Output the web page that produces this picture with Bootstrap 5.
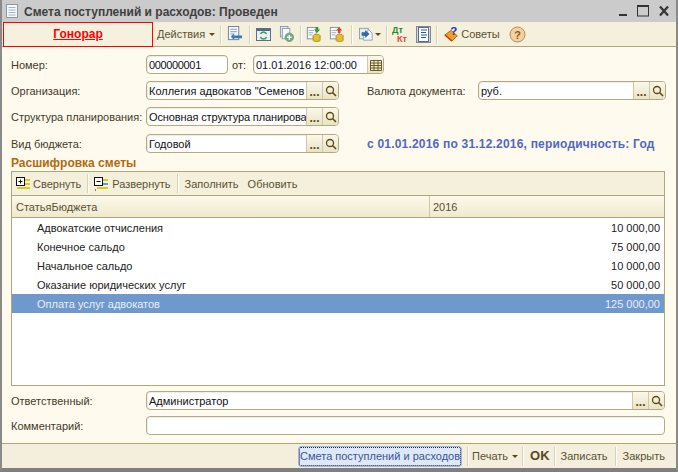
<!DOCTYPE html>
<html lang="ru">
<head>
<meta charset="utf-8">
<title>Смета</title>
<link href="https://cdn.jsdelivr.net/npm/bootstrap@5.3.0/dist/css/bootstrap.min.css" rel="stylesheet">
<style>
html,body{margin:0;width:678px;height:472px;overflow:hidden;background:#8f8f8f}
body{font:11px/16px "Liberation Sans",Arial,sans-serif;color:#3a3320}
.win{width:678px;height:472px;background:#cbcbcb;border-left:2px solid #8a8a8a;border-right:2px solid #8a8a8a;border-bottom:4px solid #7f7f7f}
.ttl{height:22px;flex:none;padding-left:4px}
.ttl-t{font-weight:700;font-size:12px;color:#3f3f3f;margin-left:5px;margin-top:1px}
.ctl{margin-left:auto;gap:10px;padding-right:7px}
.bar{height:25px;flex:none;background:#f4f0dc;border-bottom:1px solid #b0a67e}
.tabx{width:150px;height:25px;margin-left:1px;border:1px solid #f00;text-align:center;color:#f00;font-weight:700;font-size:12px;text-decoration:underline;line-height:22px;background:#f5f1de}
.bt{color:#5a5034}
.sp{width:1px;height:19px;background:#d8d2b6;box-shadow:1px 0 0 #fff;flex:none}
.car{width:0;height:0;border:3px solid transparent;border-top:3px solid #5a4a1c;border-bottom:0}
.frm{flex:1 1 auto;background:#fffaee;padding:0 11px 0 9px;min-height:0}
.rw{height:19px;flex:none}
.lbl{width:135px;flex:none;color:#3f3a2a;white-space:nowrap}
.lbl2{margin-left:28px;width:111px}
.fld{height:19px;border:1px solid #b4a97f;border-radius:4px;background:#fff;color:#111;padding-left:2px;line-height:18px;overflow:hidden;white-space:nowrap;flex:none;box-shadow:inset 1px 1px 0 #eee}
.fld-t{flex:1 1 auto;overflow:hidden;min-width:0}
.fw82{width:82px}.fw131{width:131px}.fw193{width:193px}.fw188{width:188px}
.ot{margin-left:4px;width:21px}
.numtx{letter-spacing:-.35px}
.tight{letter-spacing:-.12px}
.btn1c{width:16px;height:17px;flex:none;background:linear-gradient(#fbf8ea,#e9e3c7);border-left:1px solid #d0c8a5}
.dots{font-weight:700;line-height:20px;text-align:center;color:#5d4a10;font-size:12px}
.sect{color:#b26a0a;font-weight:700;font-size:12px;line-height:12px;margin-top:4px}
.tbl{height:215px;flex:none;margin-top:2px;border:1px solid #b0a67e;background:#fff}
.tb2{height:24px;flex:none;background:#f4f0dc;border-bottom:1px solid #b0a67e;padding-left:4px;color:#5a5034}
.hd{height:22px;flex:none;background:linear-gradient(#fdf9e9,#efe9cf);border-bottom:1px solid #b0a67e;color:#5a5034}
.hd-a{width:418px;padding-left:4px;border-right:1px solid #cfc7a4;height:100%;line-height:22px}
.hd-b{padding-left:3px;line-height:22px;height:100%}
.ln{height:19px;flex:none;padding:0 4px 0 25px;line-height:20px;color:#222}
.ln-on{background:#6f98cc;color:#e8eef8}
.ft{height:25px;flex:none;background:#f3efdc;border-top:1px solid #b0a67e;color:#5a5034}
.fb{width:164px;height:21px;margin-left:296px;border:1px solid #9db4e6;border-radius:3px;background:#dfe8fa;color:#3b5590;text-align:center;line-height:18px;outline:1px dotted #222;outline-offset:-2px;white-space:nowrap}
.okx{font-weight:700;font-size:13px;color:#5a4a1c}
.blue{color:#5069c2;font-weight:700;font-size:12px;letter-spacing:.2px;white-space:nowrap;margin-left:28px}
.l2{margin-left:2px}.l3{margin-left:3px}.l4{margin-left:4px}.l5{margin-left:5px}.l6{margin-left:6px}.l7{margin-left:7px}.l8{margin-left:8px}.l9{margin-left:9px}
.t7{margin-top:7px}.t8{margin-top:8px}.t5{margin-top:5px}.t6{margin-top:6px}
</style>
</head>
<body>
<div class="win d-flex flex-column">
  <div class="ttl d-flex align-items-center">
    <svg width="13" height="14" viewBox="0 0 13 14"><rect x=".5" y=".5" width="11" height="13" fill="#f4f7fb" stroke="#8c98a8"/><path d="M2.500 3.500h7M2.500 6h7M2.500 8.500h7M2.500 11h7" stroke="#a8b4c4"/></svg>
    <div class="ttl-t">Смета поступлений и расходов: Проведен</div>
    <div class="ctl d-flex align-items-center">
      <svg width="8" height="12" viewBox="0 0 8 12"><rect y="9" width="8" height="2" fill="#333"/></svg>
      <svg width="12" height="12" viewBox="0 0 12 12"><rect x=".5" y="1" width="11" height="10" fill="none" stroke="#333"/><path d="M0 1h12" stroke="#333" stroke-width="2"/></svg>
      <svg width="10" height="12" viewBox="0 0 10 12"><path d="M1 1.500l8 9M9 1.500l-8 9" stroke="#333" stroke-width="2.200"/></svg>
    </div>
  </div>
  <div class="bar d-flex align-items-center">
    <div class="tabx">Гонорар</div>
    <span class="bt l4">Действия</span><span class="car l4"></span>
    <span class="sp l5"></span>
    <svg class="l6" width="16" height="16" viewBox="0 0 17 17"><rect x="1.500" y=".5" width="11" height="14" fill="#f3f6fb" stroke="#6d7f99"/><path d="M3.500 3.500h7M3.500 6h7M3.500 8.500h4" stroke="#8a9ab0"/><path d="M16 10H7.500V8L4 11.500 7.500 15v-2H16z" fill="#3b7cb8"/></svg>
    <span class="sp l6"></span>
    <svg class="l6" width="15" height="15" viewBox="0 0 15 15"><rect x=".5" y="1.500" width="14" height="12" fill="#e8eff6" stroke="#5c7089"/><rect x="1" y="2" width="13" height="2" fill="#53698a"/><path d="M4.500 7a3.200 3.200 0 0 1 6 0M10.500 10a3.200 3.200 0 0 1-6 0" fill="none" stroke="#3e9a4a" stroke-width="1.500"/></svg>
    <svg class="l8" width="15" height="16" viewBox="0 0 16 17"><rect x="1.500" y=".5" width="8" height="11" fill="#eef2f8" stroke="#8a97a8"/><rect x="3.500" y="2.500" width="8" height="11" fill="#f6f8fc" stroke="#8a97a8"/><circle cx="11" cy="12" r="4.500" fill="#6fae7a" stroke="#7f9484"/><path d="M11 9.500v5M8.500 12h5" stroke="#fff" stroke-width="1.500"/></svg>
    <span class="sp l6"></span>
    <svg class="l5" width="15" height="16" viewBox="0 0 17 18"><rect x="1.500" y="1.500" width="10" height="13" fill="#f6f8fb" stroke="#7d8a9a"/><path d="M3 5h6M3 7.500h5M3 10h4" stroke="#9aa8b8"/><path d="M9 4h2V1h3v3h2l-3.500 4z" fill="#2f9a3c"/><ellipse cx="12" cy="11" rx="4" ry="1.500" fill="#f0c83c" stroke="#b08a18"/><path d="M8 11v5c0 2 8 2 8 0v-5" fill="#e8bc30" stroke="#b08a18"/></svg>
    <svg class="l8" width="15" height="16" viewBox="0 0 17 18"><rect x="1.500" y="1.500" width="10" height="13" fill="#f6f8fb" stroke="#7d8a9a"/><path d="M3 5h6M3 7.500h5M3 10h4" stroke="#9aa8b8"/><path d="M8 5h2v3h3V5h2l-3.500-4z" fill="#d8402c"/><ellipse cx="12" cy="11" rx="4" ry="1.500" fill="#f0c83c" stroke="#b08a18"/><path d="M8 11v5c0 2 8 2 8 0v-5" fill="#e8bc30" stroke="#b08a18"/></svg>
    <span class="sp l7"></span>
    <svg class="l7" width="14" height="14" viewBox="0 0 16 16"><rect x=".5" y="1.500" width="10" height="12" fill="#e8edf4" stroke="#8a97a8"/><path d="M11 3l4 4v8H5v-4z" fill="#f6f8fc" stroke="#8a97a8"/><path d="M3 6h4V3.500L12 8l-5 4.500V10H3z" fill="#2b6ca8"/></svg>
    <span class="car l2"></span>
    <span class="sp l5"></span>
    <svg class="l5" width="16" height="17" viewBox="0 0 16 17"><text x="0" y="7" font-family="Liberation Sans" font-size="9" font-weight="700" fill="#1f8a2a">Дт</text><text x="5" y="16" font-family="Liberation Sans" font-size="9" font-weight="700" fill="#f04040">Кт</text></svg>
    <svg class="l8" width="15" height="17" viewBox="0 0 15 17"><rect x=".5" y=".5" width="14" height="16" fill="#d5dae2" stroke="#7f8894"/><rect x="2.500" y="1.500" width="10" height="14" fill="#fff" stroke="#4f6f9a"/><path d="M5 4h6M5 6.500h5M5 9h6M5 11.500h5" stroke="#255a9a"/></svg>
    <span class="sp l5"></span>
    <svg class="l7" width="15" height="16" viewBox="0 0 17 18"><path d="M1 10l7-5 7 6-6 6z" fill="#f0a020" stroke="#a85f10"/><path d="M1 10l8 7" stroke="#c83020" stroke-width="1.500"/><text x="7" y="10" font-family="Liberation Sans" font-size="13" font-weight="700" fill="#2030c0">?</text></svg>
    <span class="bt l2">Советы</span>
    <svg class="l9" width="17" height="17" viewBox="0 0 17 17"><circle cx="8.500" cy="8.500" r="7.500" fill="#f4d2a0" stroke="#b08a60"/><text x="8.500" y="12.500" text-anchor="middle" font-family="Liberation Sans" font-size="11" font-weight="700" fill="#8a5a20">?</text></svg>
  </div>
  <div class="frm d-flex flex-column">
    <div class="rw d-flex align-items-center t8">
      <div class="lbl">Номер:</div>
      <div class="fld numtx fw82">000000001</div>
      <div class="ot">от:</div>
      <div class="fld d-flex fw131"><div class="fld-t">01.01.2016 12:00:00</div>
        <div class="btn1c d-flex align-items-center justify-content-center"><svg width="12" height="12" viewBox="0 0 12 12"><path d="M.5 1.500h11v10H.5zM.5 4h11M.5 6.500h11M.5 9h11M4 1.500v10M8 1.500v10" fill="none" stroke="#6a5a20"/></svg></div></div>
    </div>
    <div class="rw d-flex align-items-center t7">
      <div class="lbl">Организация:</div>
      <div class="fld d-flex fw193"><div class="fld-t">Коллегия адвокатов "Семенов</div><div class="btn1c dots">...</div><div class="btn1c d-flex align-items-center justify-content-center"><svg width="12" height="12" viewBox="0 0 12 12"><circle cx="5" cy="5" r="3.500" fill="none" stroke="#5d4a10" stroke-width="1.300"/><path d="M7.500 7.500l3.500 3.500" stroke="#5d4a10" stroke-width="1.600"/></svg></div></div>
      <div class="lbl lbl2">Валюта документа:</div>
      <div class="fld d-flex fw188"><div class="fld-t">руб.</div><div class="btn1c dots">...</div><div class="btn1c d-flex align-items-center justify-content-center"><svg width="12" height="12" viewBox="0 0 12 12"><circle cx="5" cy="5" r="3.500" fill="none" stroke="#5d4a10" stroke-width="1.300"/><path d="M7.500 7.500l3.500 3.500" stroke="#5d4a10" stroke-width="1.600"/></svg></div></div>
    </div>
    <div class="rw d-flex align-items-center t7">
      <div class="lbl">Структура планирования:</div>
      <div class="fld d-flex fw193"><div class="fld-t tight">Основная структура планирова</div><div class="btn1c dots">...</div><div class="btn1c d-flex align-items-center justify-content-center"><svg width="12" height="12" viewBox="0 0 12 12"><circle cx="5" cy="5" r="3.500" fill="none" stroke="#5d4a10" stroke-width="1.300"/><path d="M7.500 7.500l3.500 3.500" stroke="#5d4a10" stroke-width="1.600"/></svg></div></div>
    </div>
    <div class="rw d-flex align-items-center t8">
      <div class="lbl">Вид бюджета:</div>
      <div class="fld d-flex fw193"><div class="fld-t">Годовой</div><div class="btn1c dots">...</div><div class="btn1c d-flex align-items-center justify-content-center"><svg width="12" height="12" viewBox="0 0 12 12"><circle cx="5" cy="5" r="3.500" fill="none" stroke="#5d4a10" stroke-width="1.300"/><path d="M7.500 7.500l3.500 3.500" stroke="#5d4a10" stroke-width="1.600"/></svg></div></div>
      <div class="blue">с 01.01.2016 по 31.12.2016, периодичность: Год</div>
    </div>
    <div class="sect">Расшифровка сметы</div>
    <div class="tbl d-flex flex-column">
      <div class="tb2 d-flex align-items-center">
        <svg width="14" height="13" viewBox="0 0 14 13"><rect x=".5" y=".5" width="8" height="8" fill="#fff" stroke="#111"/><path d="M2.500 4.500h4M4.500 2.500v4" stroke="#111"/><rect x="9" y="2" width="5" height="2" fill="#d8c820"/><rect x="9" y="6" width="5" height="2" fill="#d8c820"/><rect x="1" y="10" width="13" height="2" fill="#d8c820"/></svg>
        <span class="l3">Свернуть</span>
        <span class="sp l6"></span>
        <svg class="l6" width="14" height="14" viewBox="0 0 14 14"><rect x=".5" y=".5" width="8" height="8" fill="#fff" stroke="#111"/><path d="M2.500 4.500h4" stroke="#111"/><rect x="9" y="2" width="5" height="2" fill="#d8c820"/><rect x="9" y="6" width="5" height="2" fill="#5aa0d8"/><rect x="3" y="10" width="11" height="2" fill="#d8c820"/><path d="M1 13h2" stroke="#111" stroke-dasharray="1 1"/></svg>
        <span class="l4">Развернуть</span>
        <span class="sp l6"></span>
        <span class="l7">Заполнить</span>
        <span class="l9">Обновить</span>
      </div>
      <div class="hd d-flex align-items-center"><div class="hd-a">СтатьяБюджета</div><div class="hd-b">2016</div></div>
      <div class="ln d-flex justify-content-between"><span>Адвокатские отчисления</span><span>10 000,00</span></div>
      <div class="ln d-flex justify-content-between"><span>Конечное сальдо</span><span>75 000,00</span></div>
      <div class="ln d-flex justify-content-between"><span>Начальное сальдо</span><span>10 000,00</span></div>
      <div class="ln d-flex justify-content-between"><span>Оказание юридических услуг</span><span>50 000,00</span></div>
      <div class="ln ln-on d-flex justify-content-between"><span>Оплата услуг адвокатов</span><span>125 000,00</span></div>
    </div>
    <div class="rw d-flex align-items-center t5">
      <div class="lbl">Ответственный:</div>
      <div class="fld d-flex flex-grow-1"><div class="fld-t">Администратор</div><div class="btn1c dots">...</div><div class="btn1c d-flex align-items-center justify-content-center"><svg width="12" height="12" viewBox="0 0 12 12"><circle cx="5" cy="5" r="3.500" fill="none" stroke="#5d4a10" stroke-width="1.300"/><path d="M7.500 7.500l3.500 3.500" stroke="#5d4a10" stroke-width="1.600"/></svg></div></div>
    </div>
    <div class="rw d-flex align-items-center t6">
      <div class="lbl">Комментарий:</div>
      <div class="fld flex-grow-1"></div>
    </div>
  </div>
  <div class="ft d-flex align-items-center">
    <div class="fb">Смета поступлений и расходов</div>
    <span class="sp l5"></span>
    <span class="l4">Печать</span><span class="car l4"></span>
    <span class="sp l4"></span>
    <span class="okx l7">OK</span>
    <span class="sp l4"></span>
    <span class="l6">Записать</span>
    <span class="sp l7"></span>
    <span class="l7">Закрыть</span>
  </div>
</div>
</body>
</html>
